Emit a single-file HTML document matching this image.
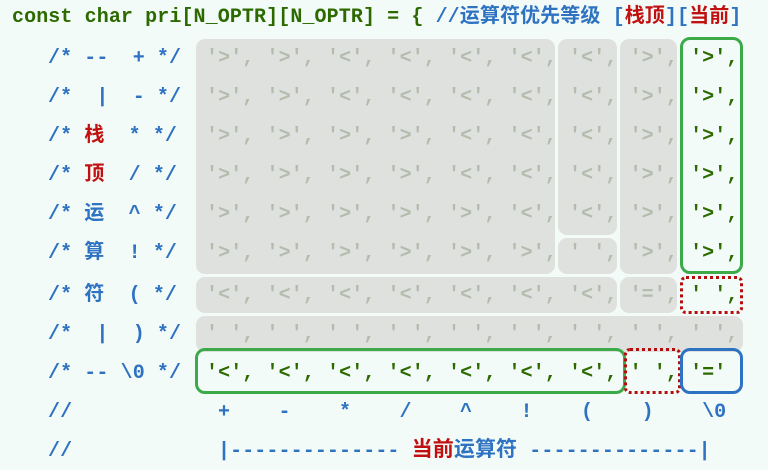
<!DOCTYPE html>
<html><head><meta charset="utf-8"><style>
body{margin:0;width:768px;height:470px;background:#f3fbf8;position:relative;overflow:hidden;font-family:"Liberation Mono","Noto Sans CJK SC",monospace;font-weight:bold;font-size:20px}
.t{position:absolute;white-space:pre;line-height:24px;letter-spacing:0.1px}
.b{position:absolute;box-sizing:border-box}
.g{background:#dfe1de;border-radius:9px}
.gr{border:3px solid #3daa4a;border-radius:10px}
.rd{border:3px dotted #b50d0d;border-radius:6px}
.bl{border:3px solid #2e72c2;border-radius:10px}
.c{color:#b4bcae}
.k{color:#2c6a00}
.lb{color:#2e72c2}
.r{color:#c01010}
.cj{font-size:21px}
</style></head><body>
<div class="t" style="left:12px;top:6px"><span class="k">const char pri[N_OPTR][N_OPTR] = { </span><span class="lb">//运算符优先等级 [</span><span class="r">栈顶</span><span class="lb">][</span><span class="r">当前</span><span class="lb">]</span></div>

<div class="b g" style="left:196px;top:39px;width:359px;height:235px"></div>
<div class="b g" style="left:558px;top:39px;width:59px;height:196px"></div>
<div class="b g" style="left:558px;top:238px;width:59px;height:36px"></div>
<div class="b g" style="left:620px;top:39px;width:57px;height:235px"></div>
<div class="b g" style="left:196px;top:277px;width:421px;height:36px"></div>
<div class="b g" style="left:620px;top:277px;width:57px;height:36px"></div>
<div class="b g" style="left:196px;top:316px;width:547px;height:36px"></div>
<div class="b gr" style="left:680px;top:37px;width:63px;height:237px"></div>
<div class="b rd" style="left:680px;top:276px;width:63px;height:38px"></div>
<div class="b gr" style="left:195px;top:348px;width:431px;height:46px"></div>
<div class="b rd" style="left:624px;top:348px;width:57px;height:46px"></div>
<div class="b bl" style="left:680px;top:348px;width:63px;height:46px"></div>

<div class="t lb" style="left:48px;top:47px">/* --  + */</div>
<div class="t lb" style="left:48px;top:86px">/*  |  - */</div>
<div class="t lb" style="left:48px;top:125px">/* <span class="r">栈</span>  * */</div>
<div class="t lb" style="left:48px;top:164px">/* <span class="r">顶</span>  / */</div>
<div class="t lb" style="left:48px;top:203px">/* 运  ^ */</div>
<div class="t lb" style="left:48px;top:242px">/* 算  ! */</div>
<div class="t lb" style="left:48px;top:284px">/* 符  ( */</div>
<div class="t lb" style="left:48px;top:323px">/*  |  ) */</div>
<div class="t lb" style="left:48px;top:362px">/* -- \0 */</div>
<div class="t lb" style="left:48px;top:401px">//</div>
<div class="t lb" style="left:48px;top:440px">//</div>

<div class="t" style="left:206px;top:47px"><span class="c">'&gt;', '&gt;', '&lt;', '&lt;', '&lt;', '&lt;', '&lt;', '&gt;', </span><span class="k">'&gt;',</span></div>
<div class="t" style="left:206px;top:86px"><span class="c">'&gt;', '&gt;', '&lt;', '&lt;', '&lt;', '&lt;', '&lt;', '&gt;', </span><span class="k">'&gt;',</span></div>
<div class="t" style="left:206px;top:125px"><span class="c">'&gt;', '&gt;', '&gt;', '&gt;', '&lt;', '&lt;', '&lt;', '&gt;', </span><span class="k">'&gt;',</span></div>
<div class="t" style="left:206px;top:164px"><span class="c">'&gt;', '&gt;', '&gt;', '&gt;', '&lt;', '&lt;', '&lt;', '&gt;', </span><span class="k">'&gt;',</span></div>
<div class="t" style="left:206px;top:203px"><span class="c">'&gt;', '&gt;', '&gt;', '&gt;', '&gt;', '&lt;', '&lt;', '&gt;', </span><span class="k">'&gt;',</span></div>
<div class="t" style="left:206px;top:242px"><span class="c">'&gt;', '&gt;', '&gt;', '&gt;', '&gt;', '&gt;', ' ', '&gt;', </span><span class="k">'&gt;',</span></div>
<div class="t" style="left:206px;top:284px"><span class="c">'&lt;', '&lt;', '&lt;', '&lt;', '&lt;', '&lt;', '&lt;', '=', </span><span class="k">' ',</span></div>
<div class="t" style="left:206px;top:323px"><span class="c">' ', ' ', ' ', ' ', ' ', ' ', ' ', ' ', ' ',</span></div>
<div class="t k" style="left:206px;top:362px">'&lt;', '&lt;', '&lt;', '&lt;', '&lt;', '&lt;', '&lt;', ' ', '='</div>
<div class="t lb" style="left:218px;top:401px">+    -    *    /    ^    !    (    )    \0</div>
<div class="t lb" style="left:218px;top:440px">|-------------- <span class="r cj">当前</span><span class="cj">运算符</span> --------------|</div>
</body></html>
